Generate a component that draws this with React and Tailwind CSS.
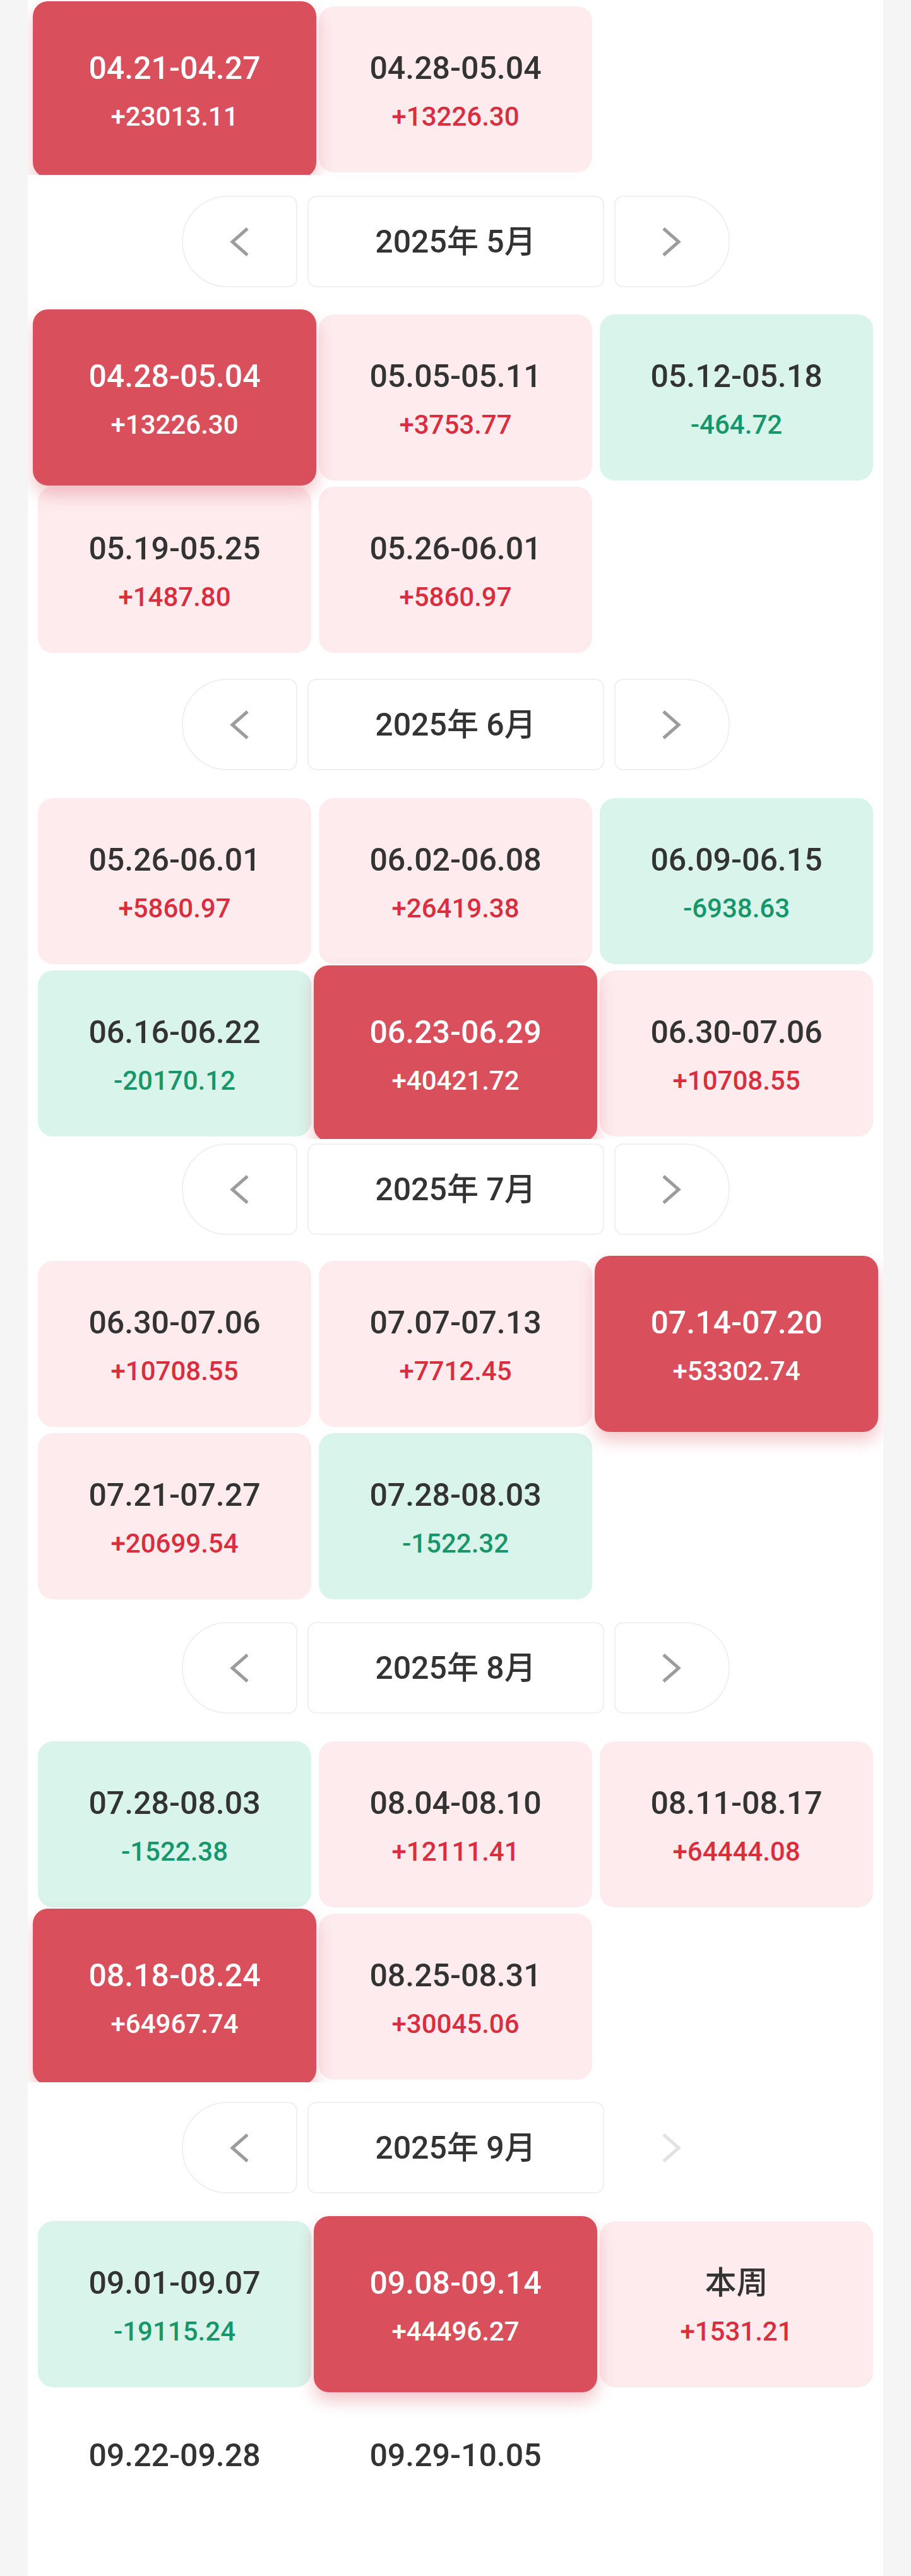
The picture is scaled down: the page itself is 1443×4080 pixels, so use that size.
import React from 'react'

// weekly P&L grid, grouped by month
const sections = [
  {
    month: null,
    top: 'pt-[10px]',
    weeks: [
      { range: '04.21-04.27', amount: '+23013.11', active: true },
      { range: '04.28-05.04', amount: '+13226.30' },
    ],
  },
  {
    month: '2025年 5月',
    navTop: 'mt-[33px]',
    top: 'pt-[43px]',
    weeks: [
      { range: '04.28-05.04', amount: '+13226.30', active: true },
      { range: '05.05-05.11', amount: '+3753.77' },
      { range: '05.12-05.18', amount: '-464.72' },
      { range: '05.19-05.25', amount: '+1487.80' },
      { range: '05.26-06.01', amount: '+5860.97' },
    ],
  },
  {
    month: '2025年 6月',
    navTop: 'mt-[37px]',
    top: 'pt-[44px]',
    weeks: [
      { range: '05.26-06.01', amount: '+5860.97' },
      { range: '06.02-06.08', amount: '+26419.38' },
      { range: '06.09-06.15', amount: '-6938.63' },
      { range: '06.16-06.22', amount: '-20170.12' },
      { range: '06.23-06.29', amount: '+40421.72', active: true },
      { range: '06.30-07.06', amount: '+10708.55' },
    ],
  },
  {
    month: '2025年 7月',
    navTop: 'mt-[7px]',
    top: 'pt-[41px]',
    weeks: [
      { range: '06.30-07.06', amount: '+10708.55' },
      { range: '07.07-07.13', amount: '+7712.45' },
      { range: '07.14-07.20', amount: '+53302.74', active: true },
      { range: '07.21-07.27', amount: '+20699.54' },
      { range: '07.28-08.03', amount: '-1522.32' },
    ],
  },
  {
    month: '2025年 8月',
    navTop: 'mt-[32px]',
    top: 'pt-[44px]',
    weeks: [
      { range: '07.28-08.03', amount: '-1522.38' },
      { range: '08.04-08.10', amount: '+12111.41' },
      { range: '08.11-08.17', amount: '+64444.08' },
      { range: '08.18-08.24', amount: '+64967.74', active: true },
      { range: '08.25-08.31', amount: '+30045.06' },
    ],
  },
  {
    month: '2025年 9月',
    navTop: 'mt-[31px]',
    top: 'pt-[44px]',
    last: true,
    weeks: [
      { range: '09.01-09.07', amount: '-19115.24' },
      { range: '09.08-09.14', amount: '+44496.27', active: true },
      { range: '本周', amount: '+1531.21' },
      { range: '09.22-09.28' },
      { range: '09.29-10.05' },
    ],
  },
]

const Chevron = ({ dir = 'left', disabled }) => (
  <svg width="30" height="46" viewBox="0 0 30 46" fill="none">
    <polyline
      points={dir === 'left' ? '28,2 4,23 28,44' : '2,2 26,23 2,44'}
      stroke={disabled ? '#e2e2e2' : '#9c9c9c'}
      strokeWidth="5"
      strokeLinejoin="miter"
    />
  </svg>
)

const MonthNav = ({ label, className, nextDisabled }) => (
  <div className={`flex justify-center gap-4 h-[145px] ${className}`}>
    <button className="w-[183px] h-full flex items-center justify-center bg-white border-2 border-[#f0f0f0] rounded-l-[72px] rounded-r-[14px]">
      <Chevron dir="left" />
    </button>
    <div className="w-[470px] h-full flex items-center justify-center bg-white border-2 border-[#f0f0f0] rounded-[14px]">
      <span className="text-[50px] leading-none font-medium text-[#333333]">{label}</span>
    </div>
    <button
      className={`w-[183px] h-full flex items-center justify-center bg-white border-2 rounded-r-[72px] rounded-l-[14px] ${
        nextDisabled ? 'border-transparent' : 'border-[#f0f0f0]'
      }`}
    >
      <Chevron dir="right" disabled={nextDisabled} />
    </button>
  </div>
)

const WeekCard = ({ range, amount, active }) => {
  const future = !amount
  const loss = amount && amount.startsWith('-')

  let box = 'h-[263px] bg-[#fdebed]'
  let dateColor = 'text-[#333333]'
  let amountColor = 'text-[#da2e3e]'
  if (loss) {
    box = 'h-[263px] bg-[#d8f4eb]'
    amountColor = 'text-[#16976a]'
  }
  if (future) box = 'h-[263px] bg-transparent'
  if (active) {
    box = 'relative z-10 -m-2 h-[279px] bg-[#d9505c] shadow-[0_14px_26px_rgba(217,80,92,0.32)]'
    dateColor = 'text-white'
    amountColor = 'text-white'
  }

  return (
    <div className={`${box} rounded-[24px] flex flex-col items-center justify-center pt-[5px]`}>
      <div className={`text-[50px] leading-none font-medium ${dateColor}`}>{range}</div>
      {future ? (
        <div className="mt-[31px] h-[42px]" />
      ) : (
        <div className={`mt-[31px] text-[42px] leading-none font-medium ${amountColor}`}>{amount}</div>
      )}
    </div>
  )
}

const App = () => {
  return (
    <div className="min-h-screen bg-[#f5f5f5] px-[44px] font-['Roboto','Noto_Sans_CJK_SC',sans-serif]">
      <div className="bg-white min-h-[4080px]">
        {sections.map((s, i) => (
          <section key={i}>
            {s.month && <MonthNav label={s.month} className={s.navTop} nextDisabled={s.last} />}
            <div className={`overflow-hidden px-4 pb-1 ${s.top}`}>
              <div className="grid grid-cols-3 gap-x-3 gap-y-[10px]">
                {s.weeks.map((w, j) => (
                  <WeekCard key={j} {...w} />
                ))}
              </div>
            </div>
          </section>
        ))}
      </div>
    </div>
  )
}

export default App
